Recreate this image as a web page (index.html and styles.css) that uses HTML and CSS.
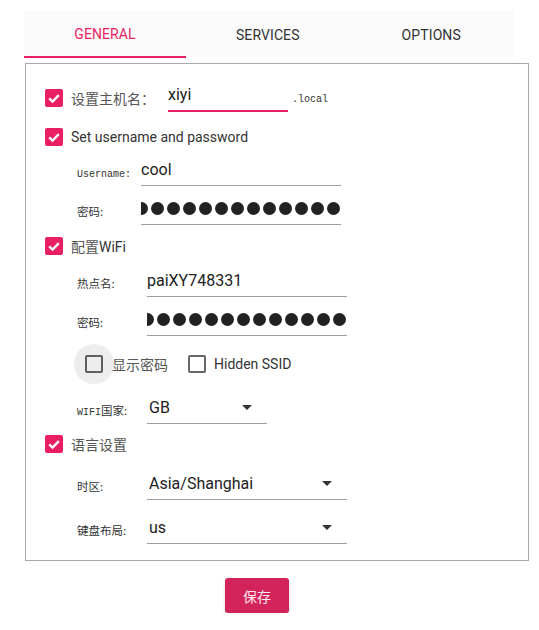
FILE: index.html
```html
<!DOCTYPE html>
<html lang="zh">
<head>
<meta charset="utf-8">
<link rel="stylesheet" href="styles.css">
</head>
<body>
<div class="page">
  <div class="tabs">
    <div class="tab active">GENERAL</div>
    <div class="tab">SERVICES</div>
    <div class="tab">OPTIONS</div>
  </div>

  <div class="panel">
    <div class="row host-row">
      <span class="cb checked"><svg viewBox="0 0 18 18" width="18" height="18"><rect x="0" y="0" width="18" height="18" rx="2" fill="#e91e63"/><path d="M4.2 9.3 L7.6 12.6 L13.8 6.2" fill="none" stroke="#fff" stroke-width="2.4"/></svg></span>
      <span class="cb-label host-label cjk">设置主机名：</span>
      <div class="field host-field">xiyi</div>
      <span class="mono suffix">.local</span>
    </div>

    <div class="row cb-row">
      <span class="cb checked"><svg viewBox="0 0 18 18" width="18" height="18"><rect x="0" y="0" width="18" height="18" rx="2" fill="#e91e63"/><path d="M4.2 9.3 L7.6 12.6 L13.8 6.2" fill="none" stroke="#fff" stroke-width="2.4"/></svg></span>
      <span class="cb-label">Set username and password</span>
    </div>

    <div class="row sub-row">
      <span class="small-label narrow"><span class="mono">Username:</span></span>
      <div class="field w200">cool</div>
    </div>

    <div class="row sub-row gap7">
      <span class="small-label narrow">密码:</span>
      <div class="field w200"><div class="dots"><i></i><i></i><i></i><i></i><i></i><i></i><i></i><i></i><i></i><i></i><i></i><i></i><i></i><i></i></div></div>
    </div>

    <div class="row cb-row gap4">
      <span class="cb checked"><svg viewBox="0 0 18 18" width="18" height="18"><rect x="0" y="0" width="18" height="18" rx="2" fill="#e91e63"/><path d="M4.2 9.3 L7.6 12.6 L13.8 6.2" fill="none" stroke="#fff" stroke-width="2.4"/></svg></span>
      <span class="cb-label"><span class="cjk">配置</span>WiFi</span>
    </div>

    <div class="row sub-row gap2">
      <span class="small-label">热点名:</span>
      <div class="field w200">paiXY748331</div>
    </div>

    <div class="row sub-row gap7">
      <span class="small-label">密码:</span>
      <div class="field w200"><div class="dots"><i></i><i></i><i></i><i></i><i></i><i></i><i></i><i></i><i></i><i></i><i></i><i></i><i></i><i></i><i></i></div></div>
    </div>

    <div class="row opt-row">
      <span class="cb empty ripple"></span>
      <span class="cb-label opt-label cjk">显示密码</span>
      <span class="cb empty"></span>
      <span class="cb-label">Hidden SSID</span>
    </div>

    <div class="row sub-row gap8">
      <span class="small-label"><span class="mono">WIFI</span>国家:</span>
      <div class="field w120 select">GB<span class="arrow"></span></div>
    </div>

    <div class="row cb-row gap3">
      <span class="cb checked"><svg viewBox="0 0 18 18" width="18" height="18"><rect x="0" y="0" width="18" height="18" rx="2" fill="#e91e63"/><path d="M4.2 9.3 L7.6 12.6 L13.8 6.2" fill="none" stroke="#fff" stroke-width="2.4"/></svg></span>
      <span class="cb-label cjk">语言设置</span>
    </div>

    <div class="row sub-row gap7">
      <span class="small-label">时区:</span>
      <div class="field w200 select">Asia/Shanghai<span class="arrow"></span></div>
    </div>

    <div class="row sub-row gap12">
      <span class="small-label">键盘布局:</span>
      <div class="field w200 select">us<span class="arrow"></span></div>
    </div>
  </div>

  <button class="save">保存</button>
</div>
</body>
</html>
```

FILE: styles.css
```css
* { box-sizing: border-box; }
html, body { margin: 0; padding: 0; background: #fff; }
body {
  font-family: Roboto, "Noto Sans CJK SC", sans-serif;
  color: #222;
}
.page { padding-top: 10px; }

.tabs {
  margin-left: 24px;
  width: 489px;
  height: 48px;
  background: #fafafa;
  display: grid;
  grid-template-columns: 162px 1fr 1fr;
}
.tab {
  display: flex;
  align-items: center;
  justify-content: center;
  font-size: 14px;
  color: #333;
  padding-top: 1px;
  letter-spacing: 0.1px;
}
.tab.active {
  color: #e91e63;
  border-bottom: 2px solid #e91e63;
  padding-top: 2px;
}

.panel {
  margin-left: 25px;
  margin-top: 5px;
  width: 504px;
  border: 1px solid #a8a8a8;
  padding: 16px 0 16px 19px;
}

.row { display: flex; align-items: center; }
.gap2 { margin-top: 2px; }
.gap3 { margin-top: 3px; }
.gap4 { margin-top: 4px; }
.gap7 { margin-top: 7px; }
.gap8 { margin-top: 8px; }
.gap12 { margin-top: 12px; }

.cb { width: 18px; height: 18px; flex-shrink: 0; display: block; }
.cb svg { display: block; }
.cb.empty {
  border: 2px solid #666;
  border-radius: 2px;
  position: relative;
}
.cb.ripple::before {
  content: "";
  position: absolute;
  left: -13px;
  top: -13px;
  width: 40px;
  height: 40px;
  border-radius: 50%;
  background: rgba(0, 0, 0, 0.07);
}

.cb-label {
  margin-left: 8px;
  font-size: 14px;
  color: #333;
}
.cjk { color: #555; }

.host-row { height: 36px; align-items: center; }
.host-label { width: 97px; }
.host-field {
  align-self: flex-start;
  width: 120px;
  height: 32px;
  border-bottom: 2px solid #e91e63 !important;
  padding-bottom: 2px;
}
.suffix { margin-left: 4px; padding-top: 3px; color: #333; }

.cb-row { height: 34px; margin-top: 4px; }
.cb-row.gap3 { margin-top: 3px; }

.sub-row { height: 32px; padding-left: 32px; }

.small-label {
  width: 70px;
  font-size: 11.5px;
  color: #333;
  padding-top: 3px;
  font-family: "Noto Sans CJK SC", sans-serif;
}
.small-label.narrow { width: 64px; }
.mono {
  font-family: "Liberation Mono", monospace;
  font-size: 10px;
}

.field {
  height: 32px;
  border-bottom: 1px solid #9e9e9e;
  display: flex;
  align-items: center;
  padding-bottom: 1px;
  font-size: 16px;
  color: #222;
  overflow: hidden;
}
.w200 { width: 200px; }
.w120 { width: 120px; }
.select { padding-left: 2px; justify-content: space-between; }
.arrow {
  width: 0;
  height: 0;
  border-left: 5px solid transparent;
  border-right: 5px solid transparent;
  border-top: 5px solid #333;
  margin-right: 15px;
}

.dots {
  width: 100%;
  display: flex;
  justify-content: flex-end;
  gap: 3px;
  overflow: hidden;
  padding-right: 1px;
}
.dots i {
  display: block;
  width: 13px;
  height: 13px;
  border-radius: 50%;
  background: #222;
  flex-shrink: 0;
}

.opt-row { height: 40px; margin-top: 8px; padding-left: 40px; }
.opt-label { margin-left: 9px; margin-right: 20px; }
.opt-row .cb-label:last-child { margin-left: 8px; }

.save {
  display: block;
  margin: 17px 0 0 225px;
  width: 64px;
  height: 35px;
  border: none;
  border-radius: 3px;
  background: #d2245a;
  color: #fde8ef;
  font-family: "Noto Sans CJK SC", sans-serif;
  font-size: 14px;
  box-shadow: 0 2px 3px rgba(0, 0, 0, 0.2);
}
```
